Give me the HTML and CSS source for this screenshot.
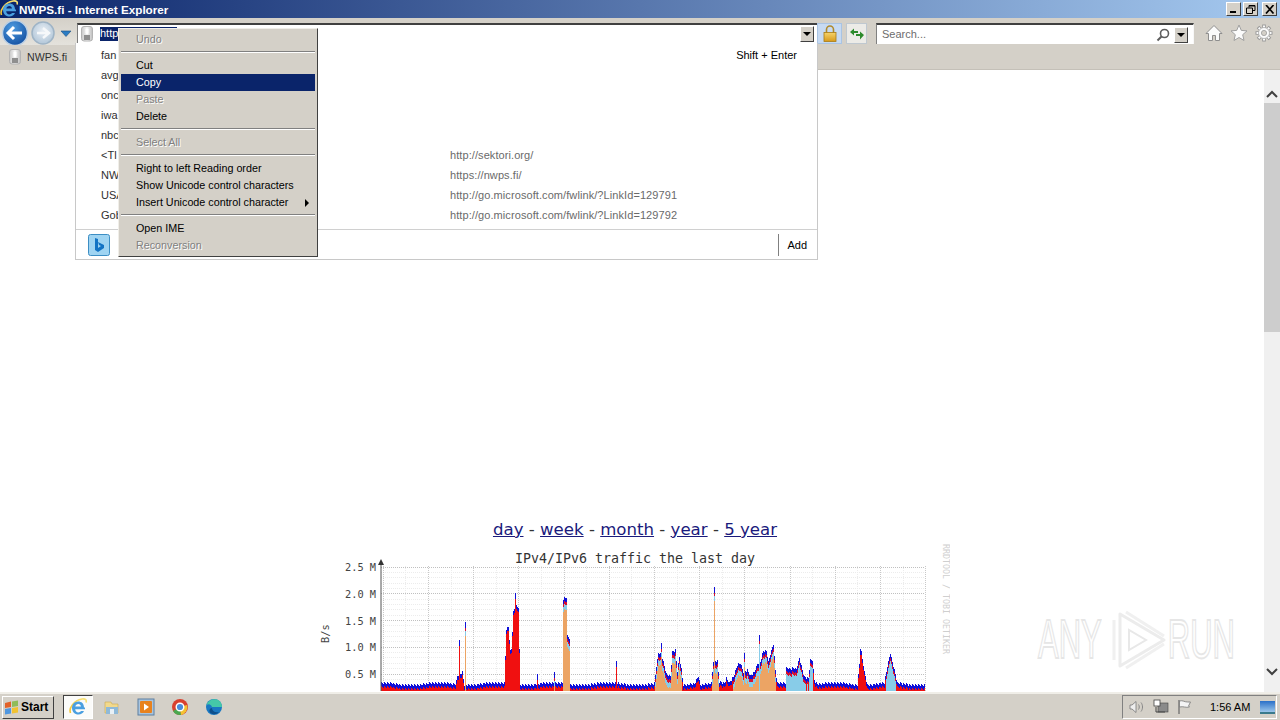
FILE: index.html
```html
<!DOCTYPE html>
<html lang="en">
<head>
    <meta charset="UTF-8">
    <title>NWPS.fi - Internet Explorer</title>
    <link rel="stylesheet" href="styles.css">
</head>
<body>
    <svg class="defs" width="0" height="0">
        <defs>
            <linearGradient id="ring" x1="0" y1="1" x2="1" y2="0">
                <stop offset="0" stop-color="#f4c430"/>
                <stop offset="1" stop-color="#f7e27a"/>
            </linearGradient>
            <radialGradient id="back-fill" cx="0.4" cy="0.3" r="0.8">
                <stop offset="0" stop-color="#4d9be0"/>
                <stop offset="1" stop-color="#0f4a9c"/>
            </radialGradient>
            <radialGradient id="forward-fill" cx="0.5" cy="0.4" r="0.7">
                <stop offset="0" stop-color="#e8eef4"/>
                <stop offset="1" stop-color="#a9c0d4"/>
            </radialGradient>
            <linearGradient id="lock-fill" x1="0" y1="0" x2="0" y2="1">
                <stop offset="0" stop-color="#f6d36a"/>
                <stop offset="1" stop-color="#d79a1c"/>
            </linearGradient>
            <linearGradient id="page-fill" x1="0" y1="0" x2="1" y2="0">
                <stop offset="0" stop-color="#c8c8c8"/>
                <stop offset="0.5" stop-color="#f6f6f6"/>
                <stop offset="1" stop-color="#bdbdbd"/>
            </linearGradient>
            <symbol id="ie-logo" viewBox="0 0 18 18">
                <path d="M1.500 15C-.5 10 5 2.500 13 1c3.500-.6 5 1 4 3.500" fill="none" stroke="url(#ring)" stroke-width="1.600"/>
                <path d="M3 9.500h12C15 5.500 12.500 3.500 9.300 3.500 5.800 3.500 3 6.300 3 10c0 3.800 2.800 6.500 6.400 6.500 2.600 0 4.800-1.400 5.600-3.500h-3.100c-.6 1-1.500 1.400-2.500 1.400-1.800 0-3.100-1.300-3.200-3.200h9.800V9.500z M6.300 8.500c.3-1.500 1.500-2.400 3-2.400s2.500 .9 2.700 2.400z" fill="#4a9fe0" fill-rule="evenodd"/>
            </symbol>
            <symbol id="page-icon" viewBox="0 0 12 16">
                <rect x=".5" y=".5" width="11" height="14.500" rx="2.500" fill="url(#page-fill)" stroke="#b4b4b4"/>
                <rect x="3" y="9" width="6" height="5" fill="#8f8f8f"/>
                <rect x="4.500" y="2.500" width="3" height="5.500" rx="1" fill="#ffffff"/>
            </symbol>
        </defs>
    </svg>

    <header class="titlebar">
        <svg class="title-logo" width="18" height="18"><use href="#ie-logo"/></svg>
        <span class="title-text">NWPS.fi - Internet Explorer</span>
        <div class="window-buttons">
            <button class="win-btn"><svg width="10" height="9"><rect x="1" y="6" width="6" height="2" fill="#000"/></svg></button>
            <button class="win-btn"><svg width="10" height="9"><path d="M3 .5h6v5H7M3 .5v2M.5 3h6v5.500h-6z M3 1h6" fill="none" stroke="#000"/></svg></button>
            <button class="win-btn win-close"><svg width="10" height="9"><path d="M1 0l7.500 8.500M8.500 0L1 8.500" stroke="#000" stroke-width="1.700"/></svg></button>
        </div>
    </header>

    <div class="toolbar">
        <div class="nav-buttons">
            <svg width="30" height="27" viewBox="0 0 30 27">
                <circle cx="15" cy="15" r="12.500" fill="url(#back-fill)" stroke="#bcd0e4" stroke-width="1.500"/>
                <path d="M8 15h14M14 9l-6 6 6 6" fill="none" stroke="#fff" stroke-width="3"/>
            </svg>
            <svg width="27" height="27" viewBox="0 0 27 27">
                <circle cx="13" cy="15" r="11" fill="url(#forward-fill)" stroke="#9fb4c6" stroke-width="1.500"/>
                <path d="M19 15H7M13 10l6 5-6 5" fill="none" stroke="#f6f8fa" stroke-width="2.500"/>
            </svg>
            <svg class="nav-drop" width="12" height="7"><path d="M1 1h10L6 6.500z" fill="#2a7cc4" stroke="#1c4f80" stroke-width=".6"/></svg>
        </div>
        <div class="address">
            <svg class="page-icon" width="12" height="16"><use href="#page-icon"/></svg>
            <span class="address-text">http</span>
            <span class="combo-arrow"></span>
        </div>
        <div class="lock-btn">
            <svg width="14" height="17" viewBox="0 0 14 17">
                <path d="M3.500 8V4.500a3.500 3.500 0 0 1 7 0V8" fill="none" stroke="#b08a2c" stroke-width="1.600"/>
                <rect x="1" y="7.500" width="12" height="9" fill="url(#lock-fill)" stroke="#a87a14" stroke-width=".8"/>
            </svg>
        </div>
        <div class="refresh-btn">
            <svg width="16" height="12" viewBox="0 0 16 12">
                <path d="M1 4l4-3.500V3h4v2H5v2.500z" fill="#2c8a2c"/>
                <path d="M15 7l-4-3.500V6H7v2h4v3.500z" fill="#2c8a2c"/>
            </svg>
        </div>
        <div class="search">
            <span class="search-text">Search...</span>
            <svg class="search-glass" width="14" height="14" viewBox="0 0 14 14">
                <circle cx="8.500" cy="5.500" r="4" fill="none" stroke="#5d5d5d" stroke-width="1.600"/>
                <path d="M5.500 8.500L1.500 12.500" stroke="#5d5d5d" stroke-width="2"/>
            </svg>
            <span class="combo-arrow"></span>
        </div>
        <div class="tools">
            <svg width="18" height="18" viewBox="0 0 18 18"><path d="M9 1.500L1 9.500h2.500v7h4v-5h3v5h4v-7H17z" fill="#fbfbfb" stroke="#8e8e8e"/></svg>
            <svg width="18" height="18" viewBox="0 0 18 18"><path d="M9 1l2.300 5.400 5.700 .5-4.300 3.800 1.300 5.800L9 13.500l-5 3 1.300-5.800L1 6.900l5.700-.5z" fill="#fbfbfb" stroke="#a0a0a0"/></svg>
            <svg width="18" height="18" viewBox="0 0 18 18">
                <path d="M9 .5v17M.5 9h17M3 3l12 12M15 3L3 15" stroke="#9a9a9a" stroke-width="3.600"/>
                <path d="M9 1.500v15M1.500 9h15M3.700 3.700l10.600 10.600M14.300 3.700L3.700 14.300" stroke="#fafafa" stroke-width="2"/>
                <circle cx="9" cy="9" r="5.500" fill="#fafafa" stroke="#a8a8a8" stroke-width=".8"/>
                <circle cx="9" cy="9" r="2.600" fill="#d4d0c8" stroke="#9a9a9a" stroke-width=".8"/>
            </svg>
        </div>
    </div>

    <div class="tabbar">
        <div class="tab">
            <svg width="12" height="16"><use href="#page-icon"/></svg>
            <span>NWPS.fi</span>
        </div>
    </div>

    <div class="viewport">
        <main class="page">
            <p class="periods"><a href="#">day</a> - <a href="#">week</a> - <a href="#">month</a> - <a href="#">year</a> - <a href="#">5 year</a></p>
            <svg id="chart" class="chart" width="630" height="147" viewBox="320 545 630 147">
                <g id="grid"></g>
                <g id="bars"></g>
                <path d="M381 563V692" stroke="#555" stroke-width="1"/>
                <path d="M381 560l-3 6h6z" fill="#333"/>
                <text class="chart-title" x="635" y="564" text-anchor="middle">IPv4/IPv6 traffic the last day</text>
                <text class="chart-axis" x="376" y="572" text-anchor="end">2.5 M</text>
                <text class="chart-axis" x="376" y="599" text-anchor="end">2.0 M</text>
                <text class="chart-axis" x="376" y="626" text-anchor="end">1.5 M</text>
                <text class="chart-axis" x="376" y="652" text-anchor="end">1.0 M</text>
                <text class="chart-axis" x="376" y="679" text-anchor="end">0.5 M</text>
                <text class="chart-axis" transform="translate(329 644) rotate(-90)">B/s</text>
                <text class="chart-credit" transform="translate(943 545) rotate(90)">RRDTOOL / TOBI OETIKER</text>
            </svg>
        </main>
        <div class="scrollbar">
            <svg class="scroll-arrow" width="16" height="17"><path d="M3 12l5-5 5 5" fill="none" stroke="#404040" stroke-width="2"/></svg>
            <div class="scroll-thumb"></div>
            <svg class="scroll-arrow scroll-down" width="16" height="17"><path d="M3 6l5 5 5-5" fill="none" stroke="#404040" stroke-width="2"/></svg>
        </div>
    </div>

    <footer class="taskbar">
        <button class="start">
            <svg width="16" height="15" viewBox="0 0 16 15">
                <path d="M1 3l6-1.500v5.500l-6 1z" fill="#e2622a"/>
                <path d="M8 1.500l6 -1v5.500l-6 1z" fill="#8fbc5a"/>
                <path d="M1 9l6-1v5.500l-6 1z" fill="#4f97e0"/>
                <path d="M8 8l6-1v5.500l-6 1z" fill="#f1c232"/>
            </svg>
            <span>Start</span>
        </button>
        <div class="task-apps">
            <div class="task-app task-active"><svg width="18" height="18"><use href="#ie-logo"/></svg></div>
            <div class="task-app">
                <svg width="16" height="16" viewBox="0 0 16 16">
                    <path d="M1 3h6l1 2h6v9H1z" fill="#f2d98c" stroke="#c9a850" stroke-width=".6"/>
                    <rect x="2" y="8" width="12" height="7" fill="#8fb9d8"/>
                    <rect x="6" y="10" width="4" height="5" fill="#e8f0f6"/>
                </svg>
            </div>
            <div class="task-app">
                <svg width="18" height="18" viewBox="0 0 18 18">
                    <rect x="1" y="1" width="16" height="16" fill="#a8c4de" stroke="#5d7fa0"/>
                    <rect x="3" y="3" width="12" height="12" rx="1" fill="#e8821e"/>
                    <path d="M7 5.500l5 3.500-5 3.500z" fill="#fff"/>
                </svg>
            </div>
            <div class="task-app">
                <svg width="18" height="18" viewBox="0 0 18 18">
                    <circle cx="9" cy="9" r="8" fill="#d9412f"/>
                    <path d="M9 9L2 13a8 8 0 0 0 8 4z" fill="#4aa84f"/>
                    <path d="M9 9l7-2a8 8 0 0 1-6 10z" fill="#f3c332"/>
                    <circle cx="9" cy="9" r="3.800" fill="#4a8cdc" stroke="#fff" stroke-width="1.400"/>
                </svg>
            </div>
            <div class="task-app">
                <svg width="18" height="18" viewBox="0 0 18 18">
                    <circle cx="9" cy="9" r="8" fill="#1a78c2"/>
                    <path d="M1.500 7C3 2 8 0.500 12 1.500c3 1 5 4 5 7.500H7C6 6 3.500 5.500 1.500 7z" fill="#45c8a8"/>
                    <path d="M7 10c0 3 3 5 7 4-2 2.500-6 3-8.500 1C3.500 13.500 4.500 10 7 10z" fill="#0d4f8c"/>
                </svg>
            </div>
        </div>
        <div class="tray">
            <svg width="16" height="14" viewBox="0 0 16 14"><path d="M1 5h2l4-3.500v11L3 9H1z" fill="#eee" stroke="#777" stroke-width=".8"/><path d="M9.500 4.500c1 1.500 1 3.500 0 5M12 2.500c2 2.500 2 6.500 0 9" fill="none" stroke="#888"/></svg>
            <svg width="16" height="16" viewBox="0 0 16 16"><rect x="5" y="4" width="10" height="9" fill="#8a8a8a" stroke="#444" stroke-width=".6"/><rect x="1" y="1" width="6" height="6" fill="#fff" stroke="#444" stroke-width=".8"/><path d="M3 8v5h9" fill="none" stroke="#444"/></svg>
            <svg width="16" height="16" viewBox="0 0 16 16"><path d="M2 1v14" stroke="#666" stroke-width="1.200"/><path d="M2.500 2c3-1 5 1 8 1l3 0-2 4 1 1c-4 1-6-1-10 0z" fill="#f4f4f4" stroke="#777" stroke-width=".8"/></svg>
            <span class="clock">1:56 AM</span>
            <span class="show-desktop"></span>
        </div>
    </footer>

    <div class="suggest">
        <div class="suggest-row"><span class="suggest-name">fan</span><span class="shortcut">Shift + Enter</span></div>
        <div class="suggest-row"><span class="suggest-name">avg</span></div>
        <div class="suggest-row"><span class="suggest-name">onc</span></div>
        <div class="suggest-row"><span class="suggest-name">iwa</span></div>
        <div class="suggest-row"><span class="suggest-name">nbc</span></div>
        <div class="suggest-row"><span class="suggest-name">&lt;Tl</span><span class="suggest-url">http://sektori.org/</span></div>
        <div class="suggest-row"><span class="suggest-name">NW</span><span class="suggest-url">https://nwps.fi/</span></div>
        <div class="suggest-row"><span class="suggest-name">USA</span><span class="suggest-url">http://go.microsoft.com/fwlink/?LinkId=129791</span></div>
        <div class="suggest-row"><span class="suggest-name">Gob</span><span class="suggest-url">http://go.microsoft.com/fwlink/?LinkId=129792</span></div>
        <div class="suggest-foot">
            <svg width="22" height="22" viewBox="0 0 22 22">
                <rect x=".5" y=".5" width="21" height="21" rx="2" fill="#9fd4f2" stroke="#3c8ec4"/>
                <path d="M7 4l3 1v9l3-2-2-1-1-3 6 3v3l-6 4-3-2z" fill="#1273c4"/>
            </svg>
            <span class="add-btn">Add</span>
        </div>
    </div>

    <div class="context-menu">
        <div class="menu-item disabled">Undo</div>
        <div class="menu-sep"></div>
        <div class="menu-item">Cut</div>
        <div class="menu-item selected">Copy</div>
        <div class="menu-item disabled">Paste</div>
        <div class="menu-item">Delete</div>
        <div class="menu-sep"></div>
        <div class="menu-item disabled">Select All</div>
        <div class="menu-sep"></div>
        <div class="menu-item">Right to left Reading order</div>
        <div class="menu-item">Show Unicode control characters</div>
        <div class="menu-item has-sub">Insert Unicode control character</div>
        <div class="menu-sep"></div>
        <div class="menu-item">Open IME</div>
        <div class="menu-item disabled">Reconversion</div>
    </div>

    <div class="watermark">
        <span>ANY</span>
        <svg class="watermark-logo" width="56" height="64" viewBox="0 0 56 64">
            <path d="M8 6v52l44-26z" fill="none" stroke="#ececec" stroke-width="3" stroke-linejoin="round"/>
            <path d="M2 12v40M14 4l38 24M14 60l38-24" fill="none" stroke="#f0f0f0" stroke-width="3"/>
            <path d="M17 22v20l17-10z" fill="#fff" stroke="#e8e8e8" stroke-width="2"/>
        </svg>
        <span>RUN</span>
    </div>

    <script src="chart.js"></script>
</body>
</html>
```
FILE: styles.css
```css
* {
    box-sizing: border-box;
}
html, body {
    margin: 0;
    height: 100%;
}
body {
    width: 1280px;
    height: 720px;
    overflow: hidden;
    display: flex;
    flex-direction: column;
    position: relative;
    background: #d4d0c8;
    font-family: "Liberation Sans", Arial, sans-serif;
    font-size: 11px;
    color: #000;
}
.defs {
    position: absolute;
}
.titlebar {
    height: 18px;
    display: flex;
    align-items: center;
    background: linear-gradient(to right, #0a246a, #a6caf0);
}
.title-logo {
    flex: none;
    margin-right: 1px;
}
.title-text {
    color: #fff;
    font-weight: bold;
    font-size: 11.700px;
}
.window-buttons {
    margin-left: auto;
    margin-right: 3px;
    display: flex;
    gap: 2px;
}
.win-btn {
    width: 15px;
    height: 14px;
    padding: 0;
    margin: 0;
    display: flex;
    align-items: center;
    justify-content: center;
    background: #d4d0c8;
    border: 1px solid;
    border-color: #fff #404040 #404040 #fff;
}
.win-close {
    margin-left: 2px;
}
.toolbar {
    height: 27px;
    display: flex;
    align-items: flex-start;
    background: #d4d0c8;
}
.nav-buttons {
    width: 77px;
    height: 27px;
    display: flex;
    align-items: center;
    background: linear-gradient(#d4d0c8, #e4e2dc);
}
.nav-drop {
    margin-left: 3px;
    margin-top: 3px;
}
.address {
    width: 740px;
    height: 20px;
    margin-top: 5px;
    display: flex;
    align-items: center;
    background: #fff;
    border-top: 2px solid #404040;
    border-left: 1px solid #808080;
    position: relative;
}
.page-icon {
    margin-left: 3px;
}
.address-text {
    margin-left: 7px;
    width: 77px;
    height: 14px;
    line-height: 13px;
    background: #0a246a;
    color: #fff;
}
.combo-arrow {
    width: 14px;
    height: 16px;
    margin-left: auto;
    margin-right: 3px;
    background: #d4d0c8;
    border: 1px solid;
    border-color: #fff #404040 #404040 #fff;
    position: relative;
    flex: none;
}
.combo-arrow::after {
    content: "";
    position: absolute;
    left: 2px;
    top: 5px;
    border: 4px solid transparent;
    border-top: 4px solid #000;
    border-bottom: 0;
}
.lock-btn {
    width: 25px;
    height: 21px;
    margin: 5px 0 0 0;
    display: flex;
    align-items: center;
    justify-content: center;
    background: #c7daf2;
    border: 1px solid #a9c4e4;
}
.refresh-btn {
    width: 21px;
    height: 21px;
    margin: 5px 0 0 4px;
    display: flex;
    align-items: center;
    justify-content: center;
    background: #ecebe7;
    border: 1px solid #bfc8d0;
}
.search {
    width: 318px;
    height: 21px;
    margin: 5px 0 0 9px;
    display: flex;
    align-items: center;
    background: #fff;
    border-top: 2px solid #404040;
    border-left: 1px solid #808080;
    border-right: 1px solid #f8f8f8;
}
.search-text {
    margin-left: 5px;
    margin-top: -2px;
    color: #6d6d6d;
}
.search-glass {
    margin-left: auto;
    margin-right: 2px;
}
.search .combo-arrow {
    margin-left: 2px;
    margin-right: 5px;
}
.tools {
    margin: 6px 0 0 11px;
    display: flex;
    gap: 7px;
}
.tabbar {
    height: 25px;
    display: flex;
    align-items: center;
    background: #d4d0c8;
    border-bottom: 1px solid #c4c0b8;
}
.tab {
    width: 76px;
    height: 25px;
    display: flex;
    align-items: center;
    gap: 6px;
    padding-left: 9px;
    font-size: 10.600px;
    color: #303030;
    background: #d4d0c8;
}
.viewport {
    flex: 1;
    min-height: 0;
    display: flex;
    background: #fff;
}
.page {
    flex: 1;
    min-width: 0;
    overflow: hidden;
    padding-top: 450px;
    display: flex;
    flex-direction: column;
    align-items: center;
    padding-left: 6px;
}
.periods {
    margin: 0;
    height: 24px;
    font-family: "DejaVu Sans", Verdana, sans-serif;
    font-size: 16.600px;
    line-height: 20px;
    color: #333;
    white-space: pre;
}
.periods a {
    color: #1a1a7c;
}
.chart {
    flex: none;
    display: block;
}
.chart-title {
    font-family: "DejaVu Sans Mono", monospace;
    font-size: 13.300px;
    fill: #333;
}
.chart-axis {
    font-family: "DejaVu Sans Mono", monospace;
    font-size: 10.300px;
    fill: #444;
}
.chart-credit {
    font-family: "DejaVu Sans Mono", monospace;
    font-size: 8.300px;
    fill: #cfcfcf;
}
.scrollbar {
    width: 16px;
    flex: none;
    display: flex;
    flex-direction: column;
    background: #f0f0f0;
    position: relative;
}
.scroll-arrow {
    flex: none;
    margin-top: 15px;
}
.scroll-thumb {
    height: 229px;
    background: #cdcdcd;
    margin-top: 1px;
}
.scroll-down {
    margin-top: auto;
    margin-bottom: 12px;
}
.taskbar {
    height: 28px;
    display: flex;
    align-items: center;
    background: #d4d0c8;
    border-top: 2px solid #f0eee8;
    padding: 0 3px 0 2px;
}
.start {
    width: 52px;
    height: 23px;
    margin: 0;
    padding: 0 0 0 1px;
    display: flex;
    align-items: center;
    gap: 1px;
    background: #d4d0c8;
    border: 1px solid;
    border-color: #fff #404040 #404040 #fff;
    font-family: "Liberation Sans", Arial, sans-serif;
    font-weight: bold;
    font-size: 12px;
    color: #000;
}
.task-apps {
    margin-left: 9px;
    display: flex;
    gap: 4px;
}
.task-app {
    width: 30px;
    height: 24px;
    display: flex;
    align-items: center;
    justify-content: center;
}
.task-active {
    background: #fbfbf9;
    border: 1px solid;
    border-color: #404040 #fff #fff #404040;
}
.tray {
    margin-left: auto;
    width: 155px;
    height: 24px;
    display: flex;
    align-items: center;
    gap: 8px;
    padding-left: 6px;
    border: 1px solid;
    border-color: #808080 #fff #fff #808080;
}
.clock {
    margin-left: 9px;
    color: #000;
    white-space: nowrap;
}
.show-desktop {
    margin-left: 2px;
    width: 15px;
    height: 13px;
    flex: none;
    background: linear-gradient(#2a70c8, #9cc6ea);
    border-bottom: 2px solid #3a7a8c;
}
.suggest {
    position: absolute;
    left: 75px;
    top: 43px;
    width: 743px;
    height: 217px;
    padding-top: 2px;
    background: #fff;
    border: 1px solid #c8c8c8;
    border-top: 0;
    color: #303030;
}
.suggest-row {
    height: 20px;
    display: flex;
    align-items: center;
    padding-left: 25px;
    position: relative;
}
.suggest-name {
    width: 349px;
    flex: none;
}
.suggest-url {
    color: #6a6a6a;
    letter-spacing: .08px;
}
.shortcut {
    margin-left: auto;
    margin-right: 20px;
    color: #000;
}
.suggest-foot {
    position: absolute;
    left: 0;
    right: 0;
    bottom: 0;
    height: 30px;
    display: flex;
    align-items: center;
    padding-left: 12px;
    border-top: 1px solid #d0d0d0;
}
.add-btn {
    margin-left: auto;
    margin-right: 10px;
    padding-left: 8px;
    height: 22px;
    line-height: 22px;
    color: #000;
    border-left: 1px solid #808080;
}
.context-menu {
    position: absolute;
    left: 118px;
    top: 28px;
    width: 200px;
    height: 229px;
    padding: 2px;
    background: #d4d0c8;
    border: 1px solid;
    border-color: #f0eee8 #404040 #404040 #f0eee8;
    font-size: 10.750px;
}
.menu-item {
    height: 17px;
    line-height: 17px;
    padding-left: 15px;
    position: relative;
}
.menu-item.disabled {
    color: #808080;
    text-shadow: 1px 1px 0 #fff;
}
.menu-item.selected {
    background: #0a246a;
    color: #fff;
}
.menu-sep {
    height: 9px;
    position: relative;
}
.menu-sep::after {
    content: "";
    position: absolute;
    left: 0;
    right: 0;
    top: 3px;
    border-top: 1px solid #808080;
    border-bottom: 1px solid #fff;
}
.has-sub::after {
    content: "";
    position: absolute;
    right: 6px;
    top: 5px;
    border: 4px solid transparent;
    border-left: 4px solid #000;
    border-right: 0;
}
.watermark {
    position: absolute;
    left: 1038px;
    top: 608px;
    display: flex;
    align-items: center;
    font-family: "Liberation Sans", Arial, sans-serif;
    font-size: 31px;
    color: #fff;
    -webkit-text-stroke: 1px #e6e6e6;
}
.watermark span {
    display: block;
    transform: scaleY(1.800);
}
.watermark-logo {
    margin-left: 10px;
}
```
FILE: chart.js
```js
const NS = 'http://www.w3.org/2000/svg';
const grid = document.getElementById('grid');
const bars = document.getElementById('bars');

function line(x1, y1, x2, y2, color) {
    const l = document.createElementNS(NS, 'line');
    l.setAttribute('x1', x1);
    l.setAttribute('y1', y1);
    l.setAttribute('x2', x2);
    l.setAttribute('y2', y2);
    l.setAttribute('stroke', color);
    l.setAttribute('stroke-dasharray', '1 1');
    grid.appendChild(l);
}

function rect(x, y, h, color) {
    if (h <= 0) return;
    const r = document.createElementNS(NS, 'rect');
    r.setAttribute('x', x);
    r.setAttribute('y', y);
    r.setAttribute('width', 1);
    r.setAttribute('height', h);
    r.setAttribute('fill', color);
    bars.appendChild(r);
}

// grid
for (let i = 0; i <= 24; i++) {
    const y = 567.5 + i * 5.35;
    line(381, Math.round(y) + 0.5, 925, Math.round(y) + 0.5, i % 5 === 0 ? '#c0c0c0' : '#ececec');
}
for (let i = -2; i <= 22; i++) {
    const x = Math.round(428 + i * 22.6) + 0.5;
    if (x < 381) continue;
    line(x, 567, x, 692, i % 2 === 0 ? '#c8c8c8' : '#ececec');
}

// [x, top of the stack]
const tops = [
    [381, 685], [455, 685], [457, 676], [462, 672], [464, 685], [504, 685], [506, 630], [508, 628],
    [510, 652], [511, 650], [513, 612], [515, 606], [518, 607], [519, 650], [520, 685],
    [562, 685], [563, 600], [566, 598], [567, 637], [569, 638], [570, 685],
    [654, 685], [656, 668], [658, 655], [661, 656], [663, 664], [666, 676], [670, 678], [672, 654],
    [675, 652], [677, 672], [679, 658], [681, 670], [683, 685], [694, 684], [698, 676], [700, 685],
    [711, 685], [713, 663], [717, 663], [719, 684], [724, 685], [726, 680], [729, 685], [733, 678],
    [737, 666], [740, 663], [743, 672], [747, 670], [750, 676], [754, 672], [757, 664], [760, 662],
    [763, 652], [766, 652], [768, 664], [770, 656], [773, 646], [775, 672], [777, 685], [785, 685],
    [786, 670], [796, 669], [799, 658], [802, 670], [804, 677], [808, 678], [810, 660], [812, 660],
    [814, 680], [817, 685], [857, 685], [859, 664], [861, 652], [864, 672], [867, 685], [884, 685],
    [887, 668], [890, 655], [892, 664], [894, 672], [897, 685], [925, 685]
];
// thin spikes, [x, top, fill]
const spikes = { 459: [641, 'r'], 465: [623, 'o'], 515: [594, 'r'], 537: [675, 'r'], 554: [673, 'o'], 616: [662, 'r'], 661: [644, 'o'], 714: [588, 'o'], 744: [654, 'o'], 759: [636, 's'], 860: [650, 'r'] };

function topAt(x) {
    for (let i = 1; i < tops.length; i++) {
        if (x <= tops[i][0]) {
            const [x0, y0] = tops[i - 1];
            const [x1, y1] = tops[i];
            return y0 + (y1 - y0) * (x - x0) / (x1 - x0);
        }
    }
    return 685;
}

function fillAt(x) {
    if ((x >= 505 && x <= 519) || (x >= 857 && x <= 867) || (x >= 457 && x <= 461)) return 'r';
    if ((x >= 786 && x <= 812) || (x >= 886 && x <= 896)) return 's';
    if ((x >= 563 && x <= 569) || (x >= 655 && x <= 684) || (x >= 711 && x <= 719) || (x >= 733 && x <= 777)) return 'o';
    return 'r';
}

const colors = { blue: '#1010d8', dark: '#d81030', red: '#f01010', orange: '#eca464', sky: '#88cce8' };

for (let x = 381; x < 925; x++) {
    const noise = Math.round(1.5 * Math.sin(x / 9)) + ((x * 7) % 3) - 1;
    let t = Math.round(topAt(x)) + noise;
    let kind = fillAt(x);
    let blueH = 4;
    if (spikes[x]) {
        t = spikes[x][0];
        kind = spikes[x][1];
        blueH = 6;
    }
    if (kind !== 'r' && t > 678) kind = 'r';
    rect(x, t, blueH, colors.blue);
    rect(x, t + blueH, 3, kind === 'r' ? colors.red : colors.dark);
    const start = t + blueH + 3;
    if (kind === 'r') {
        rect(x, start, 692 - start, colors.red);
    } else if (kind === 's') {
        rect(x, start, 692 - start, colors.sky);
    } else {
        rect(x, start, 5, colors.sky);
        rect(x, start + 5, 692 - start - 5, colors.orange);
    }
}
```
